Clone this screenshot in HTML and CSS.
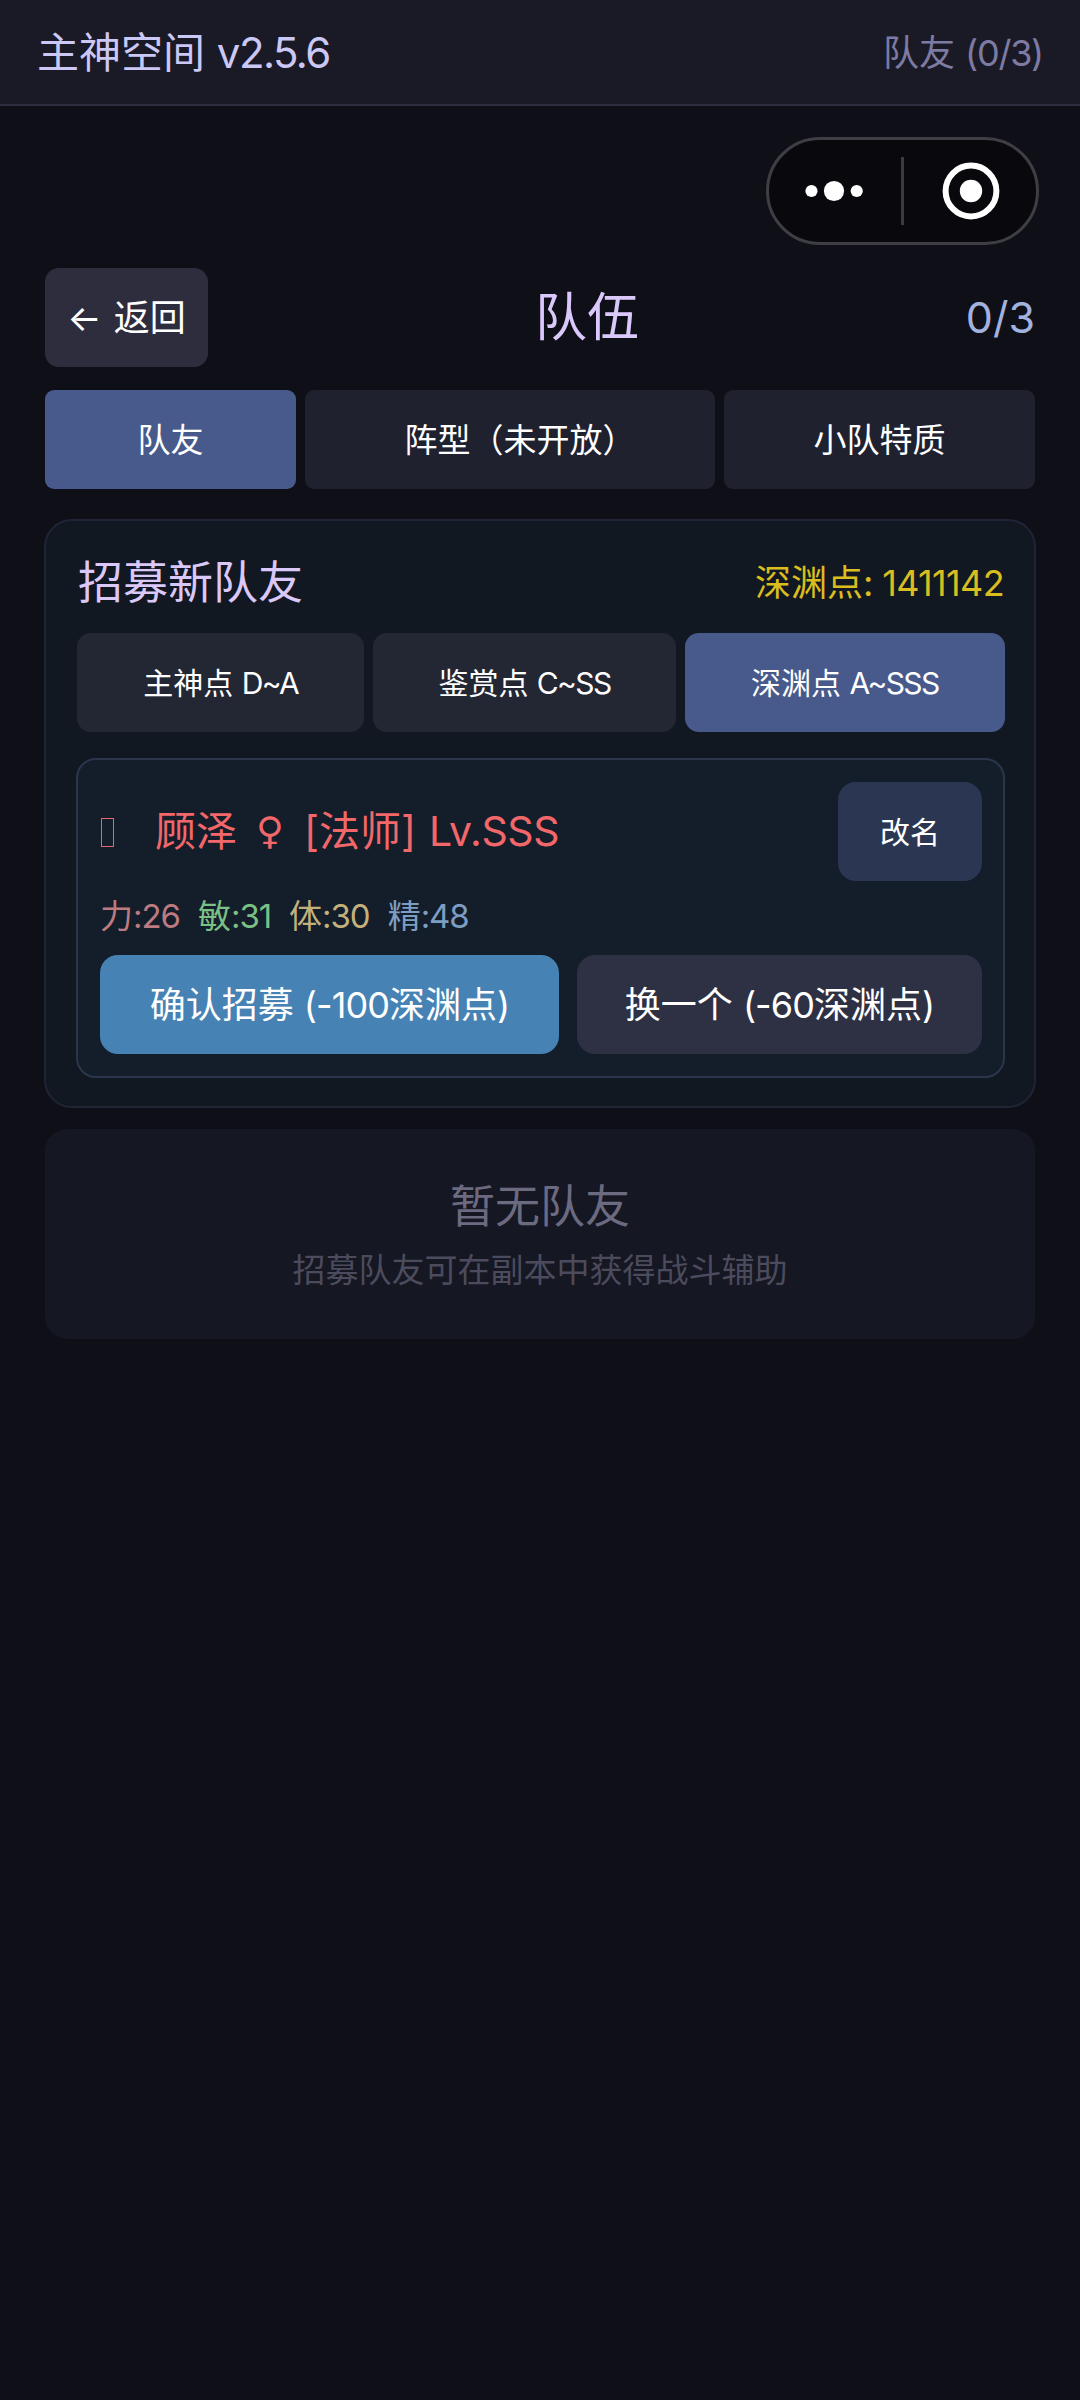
FILE: index.html
```html
<!DOCTYPE html>
<html lang="zh-CN">
<head>
<meta charset="utf-8">
<title>主神空间</title>
<link rel="stylesheet" href="styles.css">
</head>
<body>
<header class="topbar">
  <div class="app-name">主神空间 <span class="lat">v2.5.6</span></div>
  <div class="crumb">队友 <span class="lat">(0/3)</span></div>
</header>
<main class="page">
  <div class="capsule">
    <svg class="more" width="60" height="24" viewBox="0 0 60 24"><circle cx="7.5" cy="12" r="6.1"/><circle cx="30" cy="12" r="10.1"/><circle cx="52.7" cy="12" r="6.1"/></svg>
    <span class="capsule-line"></span>
    <svg class="exit" width="58" height="58" viewBox="0 0 58 58"><circle class="ring" cx="29" cy="29" r="25.4"/><circle cx="29" cy="29" r="11.2"/></svg>
  </div>
  <div class="head">
    <button class="btn back"><span class="arrow">←</span> 返回</button>
    <h1 class="title">队伍</h1>
    <div class="count">0/3</div>
  </div>
  <nav class="tabs">
    <button class="btn tab active">队友</button>
    <button class="btn tab">阵型（未开放<span class="close-paren">）</span></button>
    <button class="btn tab">小队特质</button>
  </nav>
  <section class="recruit">
    <div class="recruit-head">
      <h2 class="recruit-title">招募新队友</h2>
      <div class="points">深渊点<span class="lat">: 1411142</span></div>
    </div>
    <div class="pools">
      <button class="btn pool">主神点 <span class="lat">D~A</span></button>
      <button class="btn pool">鉴赏点 <span class="lat">C~SS</span></button>
      <button class="btn pool active">深渊点 <span class="lat">A~SSS</span></button>
    </div>
    <div class="candidate">
      <div class="candidate-head">
        <div class="candidate-name"><span class="glyph-box"></span><span class="name">顾泽</span><span class="gender">♀</span><span class="role">[法师]</span><span class="level">Lv.SSS</span></div>
        <button class="btn rename">改名</button>
      </div>
      <div class="stats">
        <span class="str">力<span class="lat">:26</span></span>
        <span class="agi">敏<span class="lat">:31</span></span>
        <span class="con">体<span class="lat">:30</span></span>
        <span class="spi">精<span class="lat">:48</span></span>
      </div>
      <div class="actions">
        <button class="btn confirm"><span>确认招募 <span class="lat">(-100</span>深渊点<span class="lat">)</span></span></button>
        <button class="btn reroll"><span>换一个 <span class="lat">(-60</span>深渊点<span class="lat">)</span></span></button>
      </div>
    </div>
  </section>
  <section class="empty">
    <div class="empty-title">暂无队友</div>
    <div class="empty-hint">招募队友可在副本中获得战斗辅助</div>
  </section>
</main>
</body>
</html>
```
FILE: styles.css
```css
* { box-sizing: border-box; }
body {
  margin: 0;
  min-height: 2400px;
  background: #0f0f18;
  color: #fff;
  font-family: Inter, "Noto Sans CJK SC", sans-serif;
  line-height: 1.3;
}
h1, h2 { margin: 0; font-weight: 400; }
.lat { letter-spacing: -0.025em; }

.topbar {
  display: flex;
  justify-content: space-between;
  align-items: center;
  height: 106px;
  padding: 2px 37px 0;
  background: #1a1a26;
  border-bottom: 2px solid #2e2d40;
}
.app-name { font-size: 42px; color: #cbc8f6; }
.app-name .lat { letter-spacing: -0.037em; }
.crumb { font-size: 36px; color: #7d7ba3; }
.crumb .lat { letter-spacing: -0.035em; }

.page { padding: 31px 45px 0; }
.capsule {
  display: flex;
  align-items: center;
  width: 273px;
  height: 108px;
  margin: 0 -4px 23px auto;
  border: 3px solid #3e3e44;
  border-radius: 54px;
  background: #08080d;
}
.capsule svg { fill: #fff; }
.more { margin-left: 35px; }
.capsule-line { width: 3px; height: 68px; margin-left: 37px; background: #3b3b41; }
.exit { margin-left: 38px; }
.exit .ring { fill: none; stroke: #fff; stroke-width: 6; }

.btn {
  display: flex;
  justify-content: center;
  align-items: center;
  height: 99px;
  padding: 1px 0 0;
  border: 0;
  border-radius: 14px;
  color: #fff;
  font-family: inherit;
  font-weight: 400;
  line-height: inherit;
  white-space: pre;
}
.head { display: flex; justify-content: space-between; align-items: center; height: 99px; }
.back { width: 163px; background: #2e2d3e; font-size: 36px; }
.arrow { margin-right: 2px; }
.title { font-size: 52px; color: #dac8fb; }
.count { font-size: 43px; color: #a2b2df; }

.tabs { display: grid; grid-template-columns: 251fr 410fr 311fr; gap: 9px; margin-top: 23px; }
.tab { border-radius: 9px; background: #1f212f; font-size: 33px; }
.close-paren { margin-right: -0.6em; }
.tab.active, .pool.active { background: #475a8b; }

.recruit {
  margin: 30px -1px 0;
  padding: 31px 29px 28px 31px;
  border: 2px solid #1f2436;
  border-radius: 28px;
  background: #121822;
}
.recruit-head { display: flex; justify-content: space-between; align-items: center; height: 61px; padding: 2px 1px 0; }
.recruit-title { font-size: 45px; color: #dac8f9; }
.points { font-size: 36px; color: #dabd1f; }
.points .lat { letter-spacing: -0.018em; }
.pools { display: grid; grid-template-columns: 287fr 302fr 320fr; gap: 9px; margin-top: 20px; }
.pool { background: #232734; font-size: 30px; }
.pool .lat { letter-spacing: -0.055em; }

.candidate {
  margin: 26px 0 0 -1px;
  padding: 22px 21px 22px 22px;
  border: 2px solid #2b364c;
  border-radius: 20px;
  background: #141d2a;
}
.candidate-head { display: flex; justify-content: space-between; align-items: center; }
.candidate-name { display: flex; align-items: center; font-size: 41px; color: #f2686a; }
.glyph-box { width: 13px; height: 29px; margin: 2px 41px 0 1px; border: 1px solid #e86669; }
.gender { width: 42px; margin-left: 12px; text-align: center; font-family: "DejaVu Sans", sans-serif; font-size: 38px; }
.role { margin-left: 13px; }
.level { margin-left: 13px; letter-spacing: -0.008em; }
.rename { width: 144px; border-radius: 18px; background: #2b3752; font-size: 30px; }
.stats { display: flex; gap: 18px; height: 45px; margin: 13px 0 16px; font-size: 33px; line-height: 45px; }
.stats .lat { letter-spacing: -0.032em; }
.str { color: #bd7b80; }
.agi { color: #7bc084; }
.con { color: #c3b07b; }
.spi { color: #7d9dc2; }
.actions { display: grid; grid-template-columns: 459fr 405fr; gap: 18px; }
.actions .btn { border-radius: 18px; font-size: 36px; }
.confirm { background: #4682b4; }
.reroll { background: #2e3144; }

.empty {
  height: 210px;
  margin-top: 21px;
  padding-top: 48px;
  border-radius: 22px;
  background: #151722;
  text-align: center;
}
.empty-title { font-size: 45px; line-height: 60px; color: #6c6a80; }
.empty-hint { margin-top: 11px; font-size: 33px; line-height: 45px; color: #4c4b5d; }
```
